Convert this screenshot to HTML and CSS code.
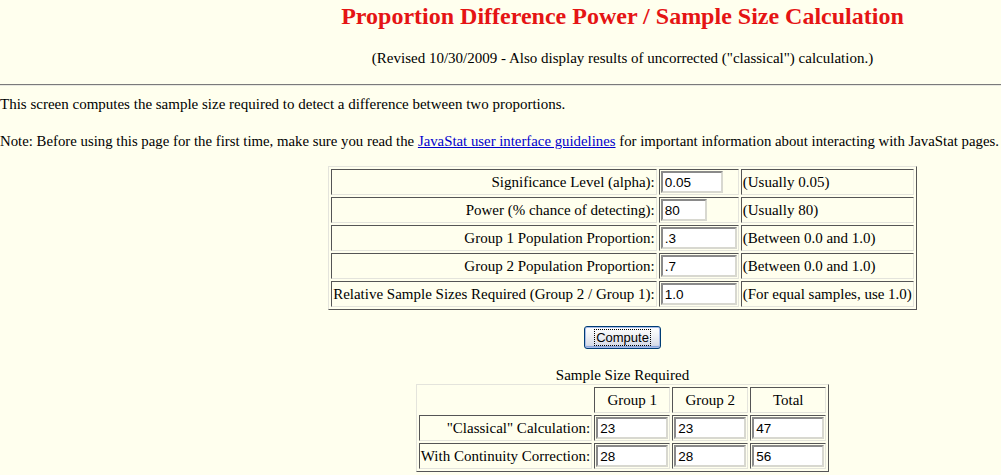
FILE: index.html
```html
<!DOCTYPE html>
<html>
<head>
<meta charset="utf-8">
<title>Proportion Difference Power / Sample Size Calculation</title>
<link rel="stylesheet" href="styles.css">
</head>
<body>
<div class="page">
  <h1 class="title">Proportion Difference Power / Sample Size Calculation</h1>
  <p class="sub">(Revised 10/30/2009 - Also display results of uncorrected ("classical") calculation.)</p>
  <hr class="rule">
  <p class="text">This screen computes the sample size required to detect a difference between two proportions.</p>
  <p class="text note-line">Note: Before using this page for the first time, make sure you read the <a href="#" class="link">JavaStat user interface guidelines</a> for important information about interacting with JavaStat pages.</p>

  <table class="grid params">
    <tr><td class="lab">Significance Level (alpha):</td><td><input class="in w60" value="0.05"></td><td class="note">(Usually 0.05)</td></tr>
    <tr><td class="lab">Power (% chance of detecting):</td><td><input class="in w44" value="80"></td><td class="note">(Usually 80)</td></tr>
    <tr><td class="lab">Group 1 Population Proportion:</td><td><input class="in w74" value=".3"></td><td class="note">(Between 0.0 and 1.0)</td></tr>
    <tr><td class="lab">Group 2 Population Proportion:</td><td><input class="in w74" value=".7"></td><td class="note">(Between 0.0 and 1.0)</td></tr>
    <tr><td class="lab">Relative Sample Sizes Required (Group 2 / Group 1):</td><td><input class="in w74" value="1.0"></td><td class="note">(For equal samples, use 1.0)</td></tr>
  </table>

  <div class="btnrow"><button class="btn"><span class="focus">Compute</span></button></div>

  <div class="cap">Sample Size Required</div>
  <table class="grid results">
    <tr><td class="empty"></td><td class="hd">Group 1</td><td class="hd">Group 2</td><td class="hd">Total</td></tr>
    <tr><td class="lab">"Classical" Calculation:</td><td><input class="in w72" value="23"></td><td><input class="in w72" value="23"></td><td><input class="in w72" value="47"></td></tr>
    <tr><td class="lab">With Continuity Correction:</td><td><input class="in w72" value="28"></td><td><input class="in w72" value="28"></td><td><input class="in w72" value="56"></td></tr>
  </table>
</div>
</body>
</html>
```
FILE: styles.css
```css
html, body {
  margin: 0;
  padding: 0;
  overflow: hidden;
  background: #FFFFEE;
}
body {
  font-family: "Liberation Serif", "Times New Roman", serif;
  font-size: 15px;
  color: #000;
}
.page {
  width: 1245px;
}
.title {
  margin: 2px 0 0;
  text-align: center;
  color: #E51414;
  font-size: 24px;
  font-weight: bold;
  line-height: 28px;
}
.sub {
  margin: 20px 0 0;
  text-align: center;
  line-height: 17px;
}
.rule {
  margin: 17px 0 0;
  border: 0;
  border-top: 1px solid #7a7a7a;
  border-bottom: 1px solid #e8e8e0;
  height: 0;
}
.text {
  margin: 10px 0 0;
  line-height: 17px;
}
.text + .text {
  margin-top: 20px;
}
.note-line {
  font-size: 14.8px;
}
.link {
  color: #0000CC;
  text-decoration: underline;
}
.grid {
  margin: 0 auto;
  border-collapse: separate;
  border-spacing: 2px;
  border-top: 1px solid #e4e4dc;
  border-left: 1px solid #e4e4dc;
  border-right: 1px solid #555;
  border-bottom: 1px solid #555;
}
.grid td {
  padding: 1px;
  border-top: 1px solid #555;
  border-left: 1px solid #555;
  border-right: 1px solid #e4e4dc;
  border-bottom: 1px solid #e4e4dc;
  line-height: 17px;
  white-space: nowrap;
}
.grid td.empty {
  border: 0;
}
.params {
  margin-top: 16px;
}
.lab {
  text-align: right;
}
.note {
  text-align: left;
  padding-right: 2px;
}
.hd {
  text-align: center;
  height: 22px;
}
.in {
  box-sizing: border-box;
  height: 22px;
  margin: 0;
  padding: 1px 2px 0;
  font-family: "Liberation Sans", Arial, sans-serif;
  font-size: 13.5px;
  color: #000;
  background: #fff;
  border-top: 2px solid #8a8a8a;
  border-left: 2px solid #8a8a8a;
  border-right: 2px solid #d8d8d0;
  border-bottom: 2px solid #d8d8d0;
  outline: 0;
  display: block;
}
.w60 { width: 62px; }
.w44 { width: 46px; }
.w74 { width: 76px; }
.w72 { width: 72px; }
.btnrow {
  display: flex;
  justify-content: center;
  margin-top: 16px;
}
.btn {
  width: 77px;
  height: 23px;
  padding: 0;
  border: 1px solid #003C74;
  border-radius: 3px;
  background: linear-gradient(#ffffff 0%, #eef0f4 45%, #d8dce8 85%, #b8c4e0 100%);
  box-shadow: inset 0 0 0 1px #a8bce8, inset 0 -2px 0 #8aa6dc;
  font-family: "Liberation Sans", Arial, sans-serif;
  font-size: 13px;
  color: #000;
  display: flex;
  align-items: center;
  justify-content: center;
}
.focus {
  outline: 1px dotted #000;
  padding: 0 1px;
  line-height: 15px;
}
.cap {
  margin-top: 18px;
  text-align: center;
  line-height: 17px;
}
.results {
  margin-top: 0;
}
```
